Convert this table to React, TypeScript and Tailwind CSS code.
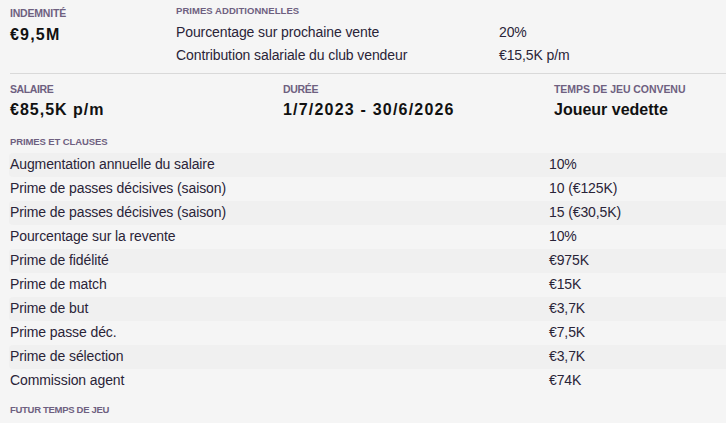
import React from "react";

const rows: [string, string][] = [
  ["Augmentation annuelle du salaire", "10%"],
  ["Prime de passes décisives (saison)", "10 (€125K)"],
  ["Prime de passes décisives (saison)", "15 (€30,5K)"],
  ["Pourcentage sur la revente", "10%"],
  ["Prime de fidélité", "€975K"],
  ["Prime de match", "€15K"],
  ["Prime de but", "€3,7K"],
  ["Prime passe déc.", "€7,5K"],
  ["Prime de sélection", "€3,7K"],
  ["Commission agent", "€74K"],
];

const label = "text-[10.5px] font-bold uppercase text-[#6e6080] leading-none";
const small = "text-[9.5px] font-bold uppercase text-[#6e6080] leading-none";
const big = "text-[16px] font-bold text-[#111] leading-none";

export default function App() {
  return (
    <div
      className="w-[726px] h-[423px] bg-[#f5f5f5] overflow-hidden text-[#2a2438]"
      style={{ fontFamily: '"Liberation Sans", Arial, sans-serif' }}
    >
      <div className="flex pl-[10px] pt-[6px] h-[73px]">
        <div className="w-[166px] pt-[2px]">
          <div className={`${label} tracking-[-0.2px]`}>Indemnité</div>
          <div className={`${big} mt-[8px] tracking-[1.2px]`}>€9,5M</div>
        </div>
        <div className="flex-1">
          <div className={`${small} tracking-[0.05px]`}>Primes additionnelles</div>
          <div className="mt-[5px] text-[14px] leading-[23px] tracking-[-0.1px]">
            <div className="flex">
              <span className="w-[323px]">Pourcentage sur prochaine vente</span>
              <span>20%</span>
            </div>
            <div className="flex">
              <span className="w-[323px]">Contribution salariale du club vendeur</span>
              <span>€15,5K p/m</span>
            </div>
          </div>
        </div>
      </div>
      <div className="ml-[10px] h-px bg-[#d9d9d9]" />
      <div className="flex pl-[10px] pt-[10px] h-[63px]">
        <div className="w-[273px]">
          <div className={`${label} tracking-[-0.4px]`}>Salaire</div>
          <div className={`${big} mt-[7px] tracking-[1px]`}>€85,5K p/m</div>
        </div>
        <div className="w-[271px]">
          <div className={`${label} tracking-[-0.3px]`}>Durée</div>
          <div className={`${big} mt-[7px] tracking-[1.2px]`}>1/7/2023 - 30/6/2026</div>
        </div>
        <div>
          <div className={`${label} tracking-[-0.05px]`}>Temps de jeu convenu</div>
          <div className={`${big} mt-[7px]`}>Joueur vedette</div>
        </div>
      </div>
      <div className={`${small} pl-[10px] tracking-[-0.1px]`}>Primes et clauses</div>
      <div className="mt-[6px] pl-[9px]">
        {rows.map(([k, v], i) => (
          <div
            key={i}
            className={`flex h-[24px] items-center text-[14px] tracking-[-0.1px] pl-[1px] rounded-l-[4px] ${
              i % 2 === 0 ? "bg-[#f0f0f0]" : ""
            }`}
          >
            <span className="w-[539px]">{k}</span>
            <span>{v}</span>
          </div>
        ))}
      </div>
      <div className={`${small} pl-[10px] mt-[12px] tracking-[-0.3px]`}>Futur temps de jeu</div>
    </div>
  );
}
